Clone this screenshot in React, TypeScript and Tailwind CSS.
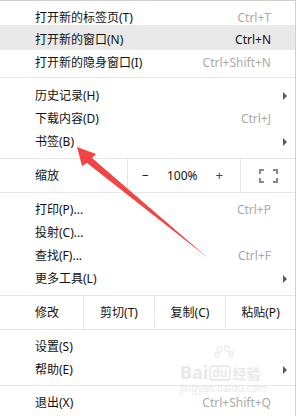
import React from "react";

type Item = { label: string; shortcut?: string; sub?: boolean; active?: boolean };

function Arrow() {
  return <span className="w-0 h-0 border-y-[4px] border-y-transparent border-l-[4px] border-l-[#5a5a5a]" />;
}

function Row({ item, className = "" }: { item: Item; className?: string }) {
  return (
    <div className={`flex items-center pl-[35px] pr-[8px] ${item.active ? "bg-[#e9e9e9]" : ""} ${className}`}>
      <span className="flex-1 text-[#111]">{item.label}</span>
      {item.shortcut && (
        <span className={`mr-[16px] ${item.active ? "text-[#111]" : "text-[#a9a9a9]"}`}>{item.shortcut}</span>
      )}
      {item.sub && <Arrow />}
    </div>
  );
}

function Sep() {
  return <div className="h-px bg-[#e6e6e6]" />;
}

function Group({ items, top = "pt-[6px]", bottom = "pb-[5px]" }: { items: Item[]; top?: string; bottom?: string }) {
  return (
    <div className={`${top} ${bottom}`}>
      {items.map((it) => (
        <Row key={it.label} item={it} className="h-[23px]" />
      ))}
    </div>
  );
}

function FullscreenIcon() {
  return (
    <svg width="19" height="14" viewBox="0 0 19 14" fill="none" stroke="#8a8a8a" strokeWidth="2">
      <path d="M1 5V1h4M14 1h4v4M18 9v4h-4M5 13H1V9" />
    </svg>
  );
}

export default function App() {
  return (
    <div className="relative w-[298px] h-[416px] bg-white overflow-hidden font-['Noto_Sans','Noto_Sans_CJK_SC',sans-serif] text-[12px]">
      <div className="w-[296px] h-full border-t border-r border-[#cfcfcf]">
        <div className="pb-[4px]">
          <Row item={{ label: "打开新的标签页(T)", shortcut: "Ctrl+T" }} className="h-[24px] pt-[9px]" />
          <Row item={{ label: "打开新的窗口(N)", shortcut: "Ctrl+N", active: true }} className="h-[25px] pt-[5px]" />
          <Row item={{ label: "打开新的隐身窗口(I)", shortcut: "Ctrl+Shift+N" }} className="h-[23px] pt-[2px]" />
        </div>
        <Sep />
        <Group
          items={[
            { label: "历史记录(H)", sub: true },
            { label: "下载内容(D)", shortcut: "Ctrl+J" },
            { label: "书签(B)", sub: true },
          ]}
        />
        <Sep />
        <div className="flex h-[33px]">
          <div className="w-[127px] pl-[35px] flex items-center text-[#111]">缩放</div>
          <div className="w-[113px] border-l border-[#e6e6e6] flex items-center justify-between pl-[14px] pr-[17px]">
            <span className="text-[#111]">−</span>
            <span className="text-[#111]">100%</span>
            <span className="text-[#5b2a86] text-[13px]">+</span>
          </div>
          <div className="flex-1 border-l border-[#e6e6e6] flex items-center justify-center">
            <FullscreenIcon />
          </div>
        </div>
        <Sep />
        <Group
          top="pt-[5px]"
          items={[
            { label: "打印(P)...", shortcut: "Ctrl+P" },
            { label: "投射(C)..." },
            { label: "查找(F)...", shortcut: "Ctrl+F" },
            { label: "更多工具(L)", sub: true },
          ]}
        />
        <Sep />
        <div className="flex h-[33px] text-[#111]">
          <div className="w-[83px] pl-[35px] flex items-center">修改</div>
          <div className="w-[71px] border-l border-[#e6e6e6] flex items-center justify-center">剪切(T)</div>
          <div className="w-[71px] border-l border-[#e6e6e6] flex items-center justify-center">复制(C)</div>
          <div className="flex-1 border-l border-[#e6e6e6] flex items-center justify-center">粘贴(P)</div>
        </div>
        <Sep />
        <Group
          top="pt-[5px]"
          bottom="pb-[4px]"
          items={[{ label: "设置(S)" }, { label: "帮助(E)", sub: true }]}
        />
        <Sep />
        <Group top="pt-[5px]" bottom="pb-0" items={[{ label: "退出(X)", shortcut: "Ctrl+Shift+Q" }]} />
      </div>

      {/* baidu watermark */}
      <div className="absolute left-[180px] top-[345px] w-[100px] pointer-events-none text-[#e8e8e8] whitespace-nowrap">
        <svg width="20" height="18" viewBox="0 0 22 20" className="ml-[34px]" fill="none" stroke="#ebebeb" strokeWidth="1.5">
          <ellipse cx="6" cy="5" rx="2.5" ry="3.2" />
          <ellipse cx="14" cy="4" rx="2.5" ry="3.2" />
          <ellipse cx="3" cy="11" rx="2.2" ry="2.8" />
          <ellipse cx="19" cy="10" rx="2.2" ry="2.8" />
        </svg>
        <div className="flex items-end leading-none">
          <span className="text-[18px] font-bold">Bai</span>
          <span className="ml-[1px] px-[1px] rounded-[4px] border-2 border-[#ebebeb] text-[12px] font-bold">du</span>
          <span className="ml-[2px] text-[14px] font-bold">经验</span>
        </div>
        <div className="text-[10px] leading-none mt-[2px]">jingyan.baidu.com</div>
      </div>

      {/* red annotation arrow */}
      <svg className="absolute left-0 top-0 pointer-events-none" width="298" height="416" viewBox="0 0 298 416">
        <polygon points="77,147 96,154 92,158 208,258 87,163 82,166" fill="#f24444" />
      </svg>
    </div>
  );
}
